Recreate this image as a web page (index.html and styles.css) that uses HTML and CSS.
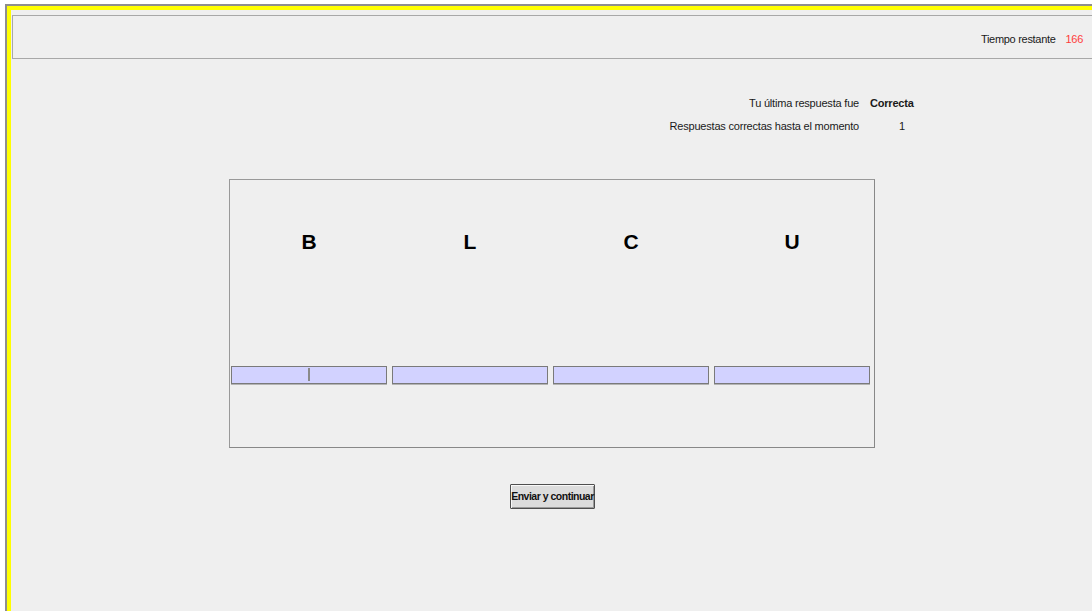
FILE: index.html
```html
<!DOCTYPE html>
<html lang="es">
<head>
<meta charset="utf-8">
<title>Prueba de letras</title>
<link rel="stylesheet" href="styles.css">
</head>
<body>
<div class="frame">
  <div class="window">
    <header class="topbar">
      <span class="timer-label">Tiempo restante</span>
      <span class="timer-value">166</span>
    </header>

    <div class="feedback">
      <span class="fb-label">Tu última respuesta fue</span>
      <span class="fb-value strong">Correcta</span>
      <span class="fb-label">Respuestas correctas hasta el momento</span>
      <span class="fb-value count">1</span>
    </div>

    <section class="task">
      <div class="letters">
        <span class="letter">B</span>
        <span class="letter">L</span>
        <span class="letter">C</span>
        <span class="letter">U</span>
      </div>
      <div class="fields">
        <div class="field"><span class="caret"></span></div>
        <div class="field"></div>
        <div class="field"></div>
        <div class="field"></div>
      </div>
    </section>

    <div class="actions">
      <button class="submit" type="button">Enviar y continuar</button>
    </div>
  </div>
</div>
</body>
</html>
```

FILE: styles.css
```css
html, body {
  margin: 0;
  padding: 0;
  background: #ffffff;
  overflow: hidden;
  font-family: "Liberation Sans", Arial, sans-serif;
  color: #1a1a1a;
}

.frame {
  margin: 4px 0 0 5px;
  border-top: 2px solid #8e8e8e;
  border-left: 2px solid #8e8e8e;
}

.window {
  border-top: 4px solid #ffff00;
  border-left: 4px solid #ffff00;
  background: #efefef;
  height: calc(100vh - 10px);
  overflow: hidden;
}

/* top bar with the countdown */
.topbar {
  box-sizing: border-box;
  width: 1084px;
  height: 44px;
  margin: 5px 0 0 1px;
  border: 1px solid #a8a8a8;
  display: flex;
  justify-content: flex-end;
  align-items: flex-start;
  gap: 10px;
  padding: 17px 12px 0 0;
  font-size: 11px;
  line-height: 13px;
  letter-spacing: -0.3px;
}

.timer-value {
  color: #ff3b3b;
}

/* last answer summary */
.feedback {
  display: grid;
  grid-template-columns: 200px 50px;
  column-gap: 11px;
  margin: 33px 0 0 648px;
  font-size: 11px;
  line-height: 23px;
  letter-spacing: -0.2px;
}

.fb-label {
  text-align: right;
  white-space: nowrap;
}

.strong {
  font-weight: bold;
}

.count {
  padding-left: 29px;
}

/* letters and answer fields */
.task {
  box-sizing: border-box;
  width: 646px;
  height: 269px;
  margin: 41px 0 0 218px;
  border: 1px solid #999999;
  border-right-color: #888888;
  border-bottom-color: #888888;
  padding: 0 4px 0 1px;
}

.letters,
.fields {
  display: grid;
  grid-template-columns: repeat(4, 156px);
  column-gap: 5px;
}

.letters {
  margin-top: 50px;
}

.letter {
  text-align: center;
  font-size: 21px;
  line-height: 24px;
  font-weight: bold;
  color: #000;
}

.fields {
  margin-top: 112px;
}

.field {
  box-sizing: border-box;
  height: 18px;
  border: 1px solid #7a7a7a;
  background: #d2d2ff;
  box-shadow: 0 1px 0 #b4b4b4;
  display: flex;
  justify-content: center;
  padding-top: 1px;
}

.caret {
  width: 2px;
  height: 13px;
  margin-left: -1px;
  background: #8a8a8a;
}

/* submit button */
.actions {
  width: 646px;
  margin: 36px 0 0 218px;
  display: flex;
  justify-content: center;
}

.submit {
  box-sizing: border-box;
  width: 85px;
  height: 25px;
  padding: 0 0 1px;
  margin-left: 1px;
  border: 1px solid #4e4e4e;
  border-radius: 1px;
  background: #dcdcdc;
  box-shadow: inset 1px 1px 0 #f8f8f8, inset -1px -1px 0 #9a9a9a;
  font-family: "Liberation Sans", Arial, sans-serif;
  font-size: 10.5px;
  font-weight: bold;
  letter-spacing: -0.5px;
  color: #111;
  white-space: nowrap;
}
```
